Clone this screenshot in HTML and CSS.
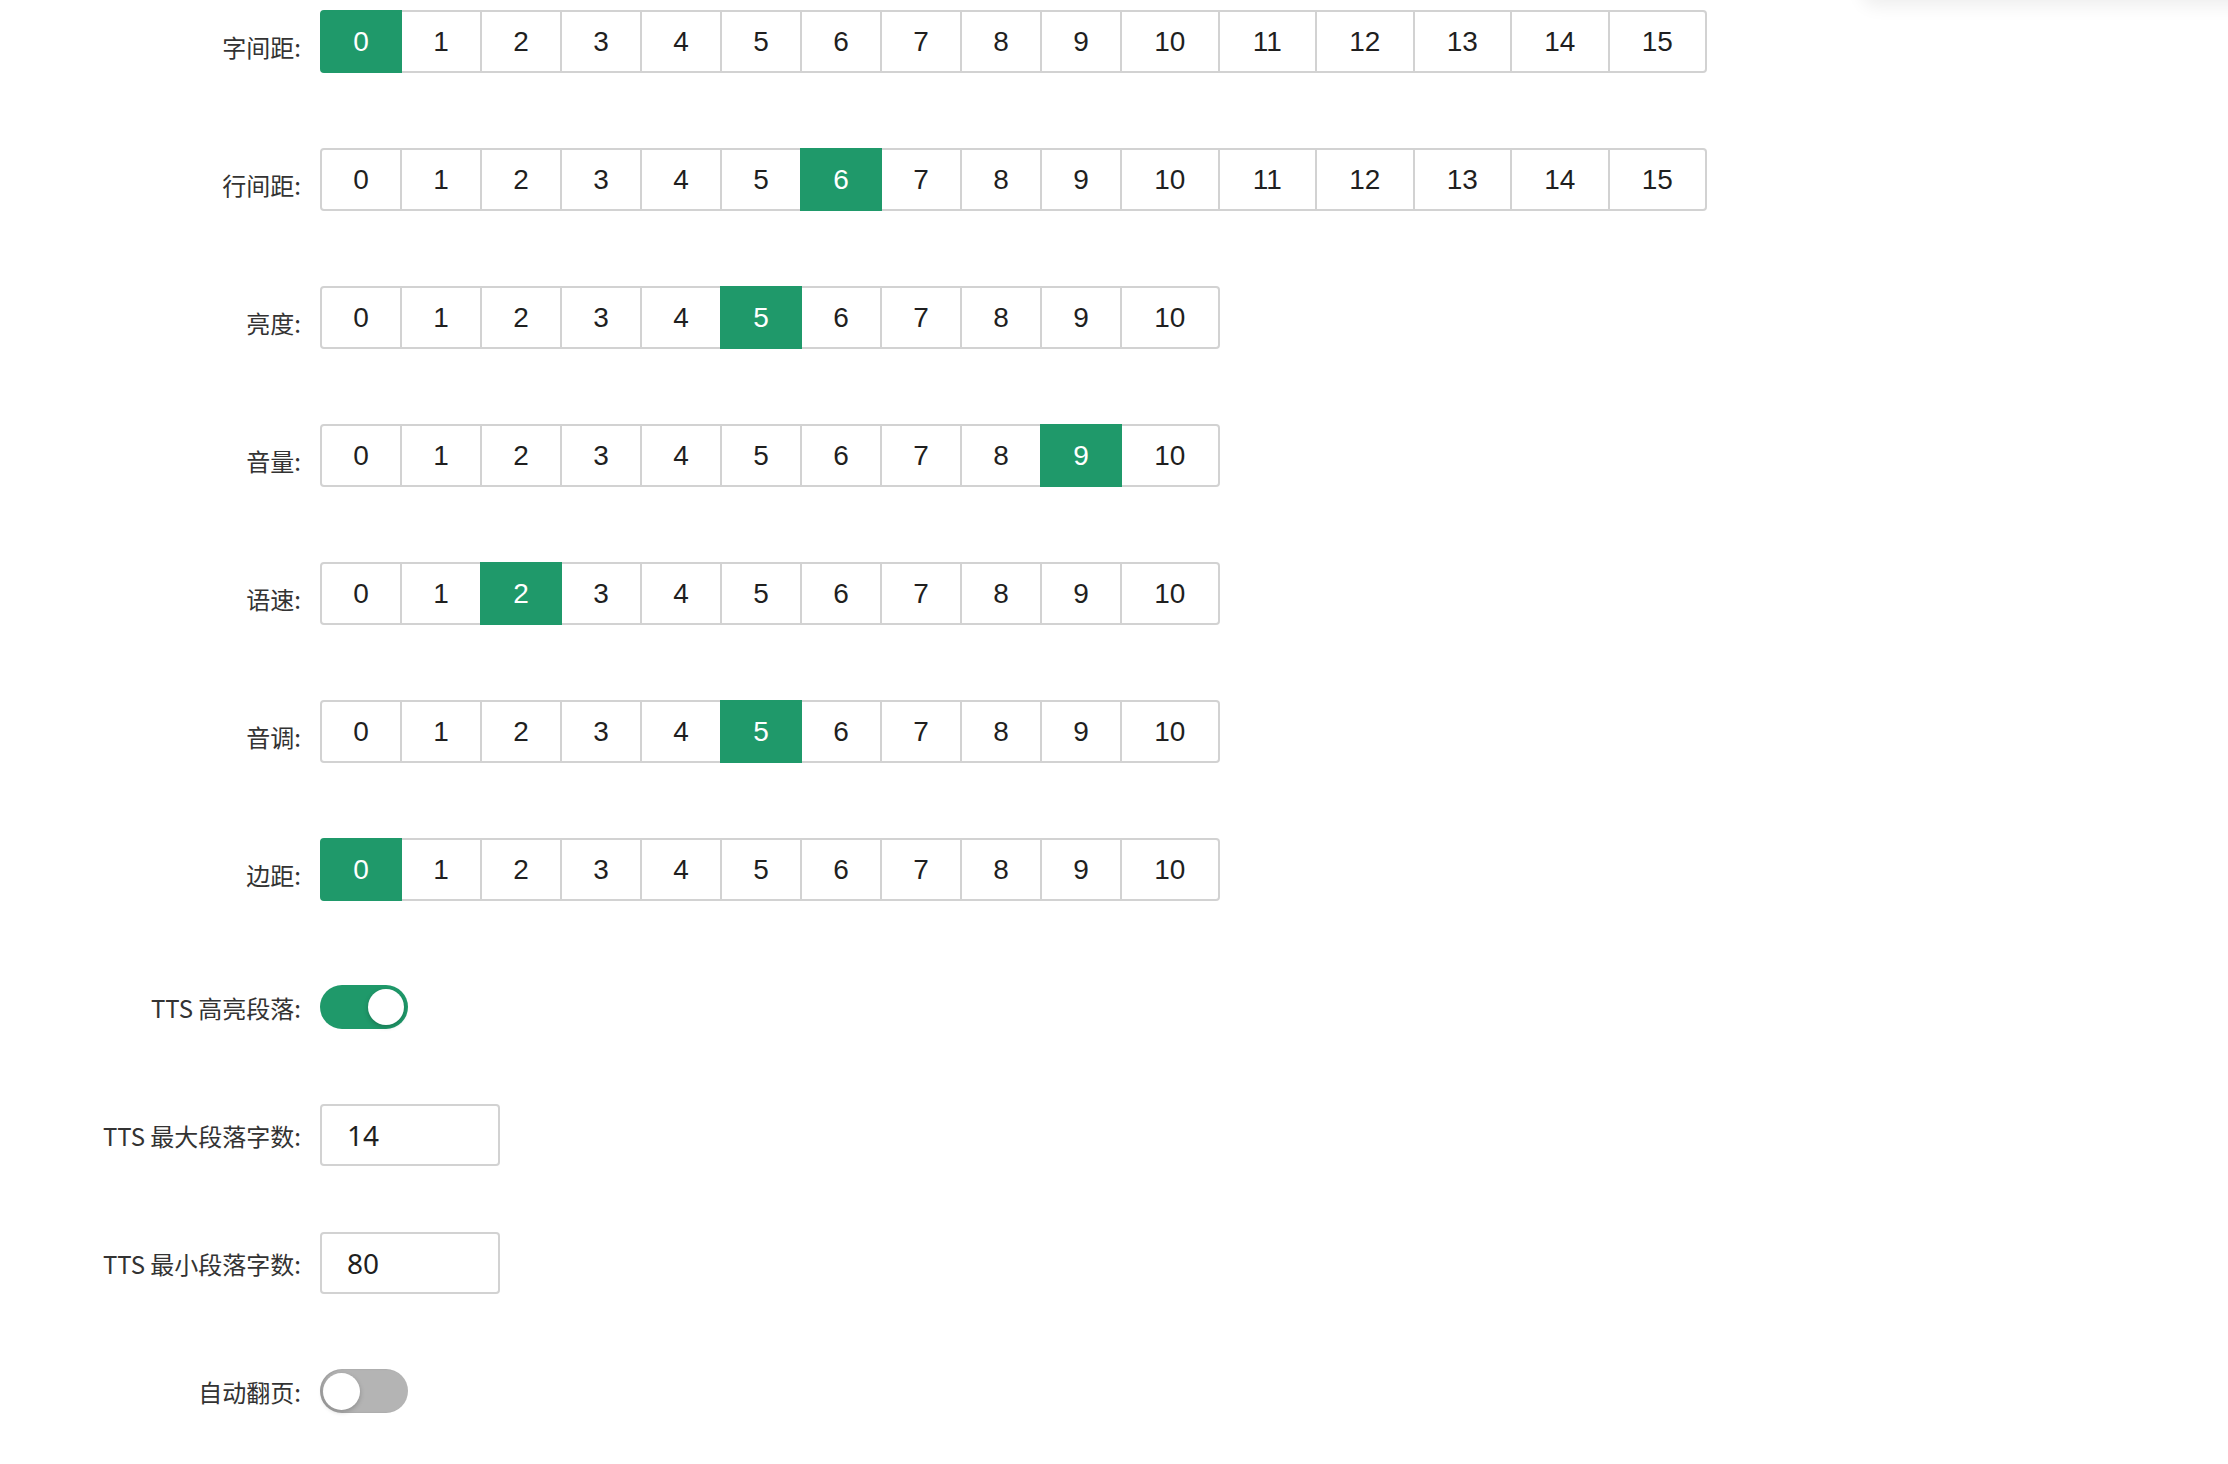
FILE: index.html
```html
<!DOCTYPE html>
<html lang="zh">
<head>
<meta charset="utf-8">
<title>设置</title>
<link rel="stylesheet" href="styles.css">
</head>
<body>
<div class="top-panel"></div>
<form class="settings">
  <div class="item seg-item">
    <label class="label">字间距:</label>
    <div class="seg">
      <span class="cell on">0</span><span class="cell">1</span><span class="cell">2</span><span class="cell">3</span><span class="cell">4</span><span class="cell">5</span><span class="cell">6</span><span class="cell">7</span><span class="cell">8</span><span class="cell">9</span><span class="cell wide">10</span><span class="cell wide">11</span><span class="cell wide">12</span><span class="cell wide">13</span><span class="cell wide">14</span><span class="cell wide">15</span>
    </div>
  </div>
  <div class="item seg-item">
    <label class="label">行间距:</label>
    <div class="seg">
      <span class="cell">0</span><span class="cell">1</span><span class="cell">2</span><span class="cell">3</span><span class="cell">4</span><span class="cell">5</span><span class="cell on">6</span><span class="cell">7</span><span class="cell">8</span><span class="cell">9</span><span class="cell wide">10</span><span class="cell wide">11</span><span class="cell wide">12</span><span class="cell wide">13</span><span class="cell wide">14</span><span class="cell wide">15</span>
    </div>
  </div>
  <div class="item seg-item">
    <label class="label">亮度:</label>
    <div class="seg">
      <span class="cell">0</span><span class="cell">1</span><span class="cell">2</span><span class="cell">3</span><span class="cell">4</span><span class="cell on">5</span><span class="cell">6</span><span class="cell">7</span><span class="cell">8</span><span class="cell">9</span><span class="cell wide">10</span>
    </div>
  </div>
  <div class="item seg-item">
    <label class="label">音量:</label>
    <div class="seg">
      <span class="cell">0</span><span class="cell">1</span><span class="cell">2</span><span class="cell">3</span><span class="cell">4</span><span class="cell">5</span><span class="cell">6</span><span class="cell">7</span><span class="cell">8</span><span class="cell on">9</span><span class="cell wide">10</span>
    </div>
  </div>
  <div class="item seg-item">
    <label class="label">语速:</label>
    <div class="seg">
      <span class="cell">0</span><span class="cell">1</span><span class="cell on">2</span><span class="cell">3</span><span class="cell">4</span><span class="cell">5</span><span class="cell">6</span><span class="cell">7</span><span class="cell">8</span><span class="cell">9</span><span class="cell wide">10</span>
    </div>
  </div>
  <div class="item seg-item">
    <label class="label">音调:</label>
    <div class="seg">
      <span class="cell">0</span><span class="cell">1</span><span class="cell">2</span><span class="cell">3</span><span class="cell">4</span><span class="cell on">5</span><span class="cell">6</span><span class="cell">7</span><span class="cell">8</span><span class="cell">9</span><span class="cell wide">10</span>
    </div>
  </div>
  <div class="item seg-item">
    <label class="label">边距:</label>
    <div class="seg">
      <span class="cell on">0</span><span class="cell">1</span><span class="cell">2</span><span class="cell">3</span><span class="cell">4</span><span class="cell">5</span><span class="cell">6</span><span class="cell">7</span><span class="cell">8</span><span class="cell">9</span><span class="cell wide">10</span>
    </div>
  </div>
  <div class="item">
    <label class="label">TTS 高亮段落:</label>
    <span class="switch on"><span class="knob"></span></span>
  </div>
  <div class="item">
    <label class="label">TTS 最大段落字数:</label>
    <input class="field" type="text" value="14">
  </div>
  <div class="item">
    <label class="label">TTS 最小段落字数:</label>
    <input class="field" type="text" value="80">
  </div>
  <div class="item">
    <label class="label">自动翻页:</label>
    <span class="switch"><span class="knob"></span></span>
  </div>
</form>
</body>
</html>
```

FILE: styles.css
```css
html, body {
  margin: 0;
  padding: 0;
  background: #ffffff;
}

body {
  font-family: "Liberation Sans", "Noto Sans CJK SC", sans-serif;
  color: #222222;
  overflow: hidden;
}

.top-panel {
  position: fixed;
  top: -60px;
  left: 1862px;
  width: 420px;
  height: 60px;
  background: #ffffff;
  border-radius: 14px;
  box-shadow: 0 6px 18px rgba(0, 0, 0, 0.07);
}

.settings {
  padding-top: 10px;
}

.item {
  display: flex;
  align-items: center;
  min-height: 62px;
  margin-bottom: 66px;
}

.seg-item {
  margin-bottom: 65px;
}

.label {
  box-sizing: border-box;
  width: 320px;
  padding-right: 19px;
  text-align: right;
  font-family: "Noto Sans CJK SC", "Noto Sans", sans-serif;
  font-size: 24px;
  color: #333333;
  white-space: nowrap;
}

.seg {
  display: flex;
  margin-bottom: 10px;
}

.cell {
  box-sizing: border-box;
  display: flex;
  align-items: center;
  justify-content: center;
  width: 82px;
  height: 63px;
  margin-left: -2px;
  border: 2px solid #d2d2d2;
  background: #ffffff;
  font-family: "Liberation Sans", "Noto Sans CJK SC", sans-serif;
  font-size: 28px;
  color: #1f1f1f;
}

.cell:first-child {
  margin-left: 0;
  border-radius: 4px 0 0 4px;
}

.cell:last-child {
  border-radius: 0 4px 4px 0;
}

.cell.wide {
  width: 99.5px;
}

.cell.on {
  position: relative;
  z-index: 1;
  background: #1f996a;
  border-color: #1f996a;
  color: #ffffff;
}

.switch {
  box-sizing: border-box;
  display: flex;
  align-items: center;
  justify-content: flex-start;
  width: 88px;
  height: 44px;
  padding: 0 3px;
  border-radius: 22px;
  background: #b4b4b4;
  box-shadow: inset 2px 0 2px rgba(0, 0, 0, 0.12);
}

.switch.on {
  justify-content: flex-end;
  padding: 0 4px;
  background: #1f996a;
  box-shadow: none;
}

.knob {
  width: 37px;
  height: 37px;
  border-radius: 50%;
  background: #ffffff;
  box-shadow: 0 2px 5px rgba(0, 0, 0, 0.22);
}

.switch.on .knob {
  width: 36px;
  height: 36px;
}

.field {
  box-sizing: border-box;
  width: 180px;
  height: 62px;
  margin: 0;
  padding: 0 0 0 25px;
  border: 2px solid #d2d2d2;
  border-radius: 4px;
  background: #ffffff;
  font-family: "Noto Sans", "Open Sans", sans-serif;
  font-size: 28px;
  color: #1f1f1f;
  outline: none;
}
```
